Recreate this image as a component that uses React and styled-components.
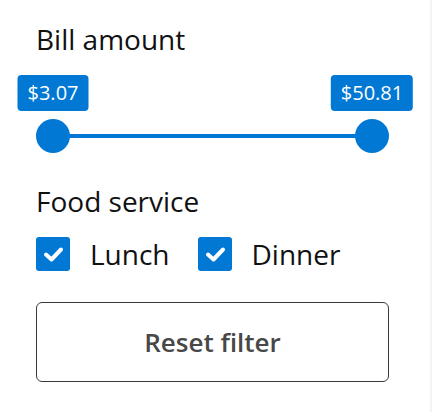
import React, { useState } from 'react';
import styled, { createGlobalStyle } from 'styled-components';

const GlobalStyle = createGlobalStyle`
  body {
    margin: 0;
    background: #ffffff;
    font-family: "Open Sans", "Noto Sans", sans-serif;
  }
`;

const Panel = styled.div`
  box-sizing: border-box;
  width: 432px;
  height: 412px;
  padding: 21px 0 0 36px;
  border-right: 2px solid #f3f3f3;
  display: flex;
  flex-direction: column;
`;

const Heading = styled.div`
  font-size: 28px;
  line-height: 36px;
  color: #111;
  margin-bottom: ${(p) => p.gap || 0}px;
`;

const Slider = styled.div`
  position: relative;
  width: 353px;
  height: 78px;
  margin-bottom: 30px;
`;

const Track = styled.div`
  position: absolute;
  left: 17px;
  right: 17px;
  bottom: 15px;
  height: 4px;
  background: #0078d4;
`;

const Thumb = styled.div`
  position: absolute;
  bottom: 0;
  width: 34px;
  height: 34px;
  margin-left: -17px;
  border-radius: 50%;
  background: #0078d4;
`;

const Tag = styled.div`
  position: absolute;
  top: 0;
  transform: translateX(-50%);
  height: 36px;
  padding: 0 10px;
  border-radius: 4px;
  background: #0078d4;
  color: #fff;
  font-size: 20px;
  line-height: 36px;
  white-space: nowrap;
`;

const Options = styled.div`
  display: flex;
  align-items: center;
  gap: 28px;
  margin-top: 16px;
  margin-bottom: 29px;
`;

const Option = styled.label`
  display: flex;
  align-items: center;
  gap: 20px;
  font-size: 28px;
  color: #111;
  cursor: pointer;
`;

const Box = styled.span`
  width: 34px;
  height: 34px;
  border-radius: 3px;
  background: ${(p) => (p.checked ? '#0078d4' : '#fff')};
  border: ${(p) => (p.checked ? 'none' : '2px solid #333')};
  box-sizing: border-box;
  display: flex;
  align-items: center;
  justify-content: center;
`;

const ResetButton = styled.button`
  box-sizing: border-box;
  width: 353px;
  height: 80px;
  border: 1.5px solid #3a3a3a;
  border-radius: 6px;
  background: #fff;
  font-family: "Open Sans", "Noto Sans", sans-serif;
  font-size: 26px;
  font-weight: 600;
  color: #484848;
  cursor: pointer;
`;

const Check = () => (
  <svg width="34" height="34" viewBox="0 0 34 34">
    <polyline points="10,17.5 15.5,22.5 25,12.5" fill="none" stroke="#fff" strokeWidth="4" strokeLinecap="round" strokeLinejoin="round" />
  </svg>
);

const min = 3.07;
const max = 50.81;

function App() {
  const [range] = useState([3.07, 50.81]);
  const [lunch, setLunch] = useState(true);
  const [dinner, setDinner] = useState(true);
  const pct = (v) => ((v - min) / (max - min)) * 100;
  const pos = (v) => `calc(17px + (100% - 34px) * ${pct(v) / 100})`;

  return (
    <Panel>
      <GlobalStyle />
      <Heading gap={18}>Bill amount</Heading>
      <Slider>
        <Track />
        {range.map((v) => (
          <React.Fragment key={v}>
            <Tag style={{ left: pos(v) }}>${v.toFixed(2)}</Tag>
            <Thumb style={{ left: pos(v) }} />
          </React.Fragment>
        ))}
      </Slider>
      <Heading>Food service</Heading>
      <Options>
        <Option onClick={() => setLunch(!lunch)}>
          <Box checked={lunch}>{lunch && <Check />}</Box>
          Lunch
        </Option>
        <Option onClick={() => setDinner(!dinner)}>
          <Box checked={dinner}>{dinner && <Check />}</Box>
          Dinner
        </Option>
      </Options>
      <ResetButton>Reset filter</ResetButton>
    </Panel>
  );
}

export default App;
